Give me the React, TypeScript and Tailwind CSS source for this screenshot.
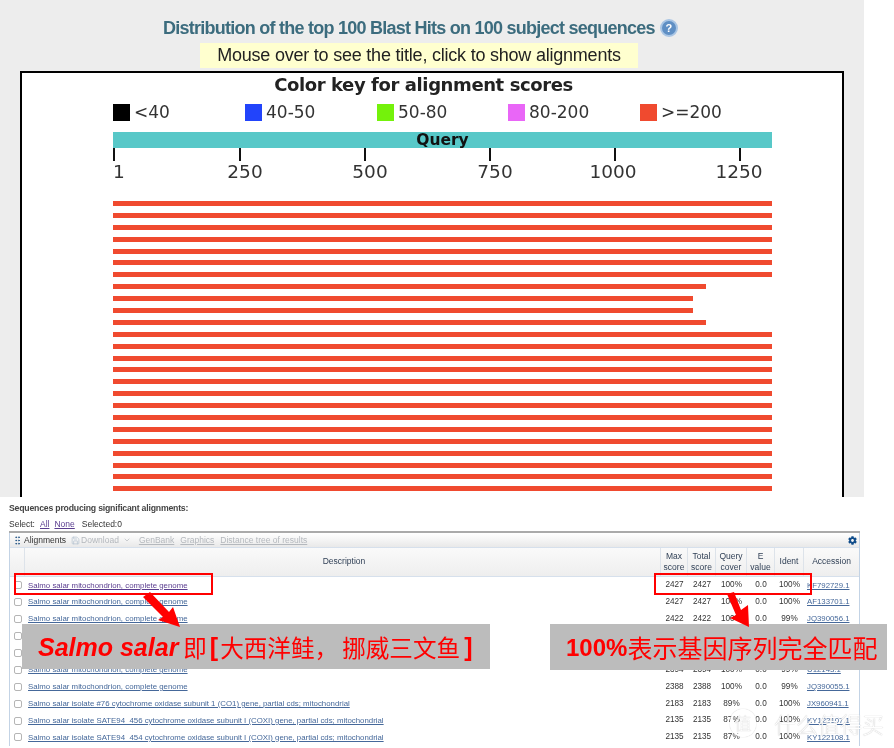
import { ChevronDown, Save, GripVertical } from 'lucide-react';
import { FaCog } from 'react-icons/fa';

const partial = (a: string, b: string) =>
    `Salmo salar isolate ${a} cytochrome oxidase subunit ${b}) gene, partial cds; mitochondrial`;

const rows = [
    { title: 'Salmo salar mitochondrion, complete genome', max: 2427, total: 2427, cover: '100%', ident: '100%', acc: 'KF792729.1', visited: true },
    { title: 'Salmo salar mitochondrion, complete genome', max: 2427, total: 2427, cover: '100%', ident: '100%', acc: 'AF133701.1' },
    { title: 'Salmo salar mitochondrion, complete genome', max: 2422, total: 2422, cover: '100%', ident: '99%', acc: 'JQ390056.1' },
    { title: 'Salmo salar mitochondrion, complete genome', max: 2416, total: 2416, cover: '100%', ident: '99%', acc: 'JQ390057.1' },
    { title: 'Salmo salar mitochondrion, complete genome', max: 2399, total: 2399, cover: '100%', ident: '99%', acc: 'JQ390058.1' },
    { title: 'Salmo salar mitochondrion, complete genome', max: 2394, total: 2394, cover: '100%', ident: '99%', acc: 'U12143.1' },
    { title: 'Salmo salar mitochondrion, complete genome', max: 2388, total: 2388, cover: '100%', ident: '99%', acc: 'JQ390055.1' },
    { title: partial('#76', '1 (CO1'), max: 2183, total: 2183, cover: '89%', ident: '100%', acc: 'JX960941.1' },
    { title: partial('SATE94_456', 'I (COXI'), max: 2135, total: 2135, cover: '87%', ident: '100%', acc: 'KY122107.1' },
    { title: partial('SATE94_454', 'I (COXI'), max: 2135, total: 2135, cover: '87%', ident: '100%', acc: 'KY122108.1' },
];

const legend = [
    { label: '<40', color: 'bg-black', width: 'w-[132px]' },
    { label: '40-50', color: 'bg-[#2244fb]', width: 'w-[132px]' },
    { label: '50-80', color: 'bg-[#74f20b]', width: 'w-[131px]' },
    { label: '80-200', color: 'bg-[#e966f7]', width: 'w-[132px]' },
    { label: '>=200', color: 'bg-[#f04a2f]', width: 'w-[124px]' },
];

const ticks = [
    { x: 1, textX: 6, label: '1' },
    { x: 127, textX: 132, label: '250' },
    { x: 252, textX: 257, label: '500' },
    { x: 377, textX: 382, label: '750' },
    { x: 502, textX: 500, label: '1000' },
    { x: 627, textX: 626, label: '1250' },
];

// 25 hit bars, four of them stop short of the query end
const hits = Array.from({ length: 25 }, (_, i) => {
    if (i === 7 || i === 10) return 'w-[593px]';
    if (i === 8 || i === 9) return 'w-[580px]';
    return 'w-full';
});

const columns = 'grid-cols-[15px_636px_27px_28px_31px_28px_29px_1fr]';

export default function App() {
    return (
        <div className="relative h-[748px] w-[894px] overflow-hidden bg-white font-['Liberation_Sans',sans-serif] blur-[0.3px]">
            {/* Blast graphic */}
            <div className="flex h-[497px] w-[864px] flex-col items-start bg-[#ededed]">
                <div className="mt-[17px] ml-[163px] flex h-[22px] items-center gap-[5px] text-[18px] leading-[22px] font-bold tracking-[-0.75px] text-[#3c6c7e]">
                    Distribution of the top 100 Blast Hits on 100 subject sequences
                    <span className="flex h-[18px] w-[18px] items-center justify-center rounded-full border-2 border-[#a9c5e4] bg-[#5f8fc4] text-[11px] tracking-normal text-white">
                        ?
                    </span>
                </div>
                <div className="mt-[4px] ml-[200px] flex h-[25px] w-[438px] items-center justify-center bg-[#ffffcf] text-[18px] tracking-[-0.22px] text-[#222]">
                    Mouse over to see the title, click to show alignments
                </div>
                <div className="mt-[3px] ml-[20px] flex h-[426px] w-[824px] flex-col border-x-2 border-t-2 border-black bg-white pl-[91px] font-['DejaVu_Sans',sans-serif]">
                    <div className="mt-[1px] h-[22px] pr-[108px] text-center text-[18px] leading-[22px] font-bold tracking-[-0.4px] text-[#222]">
                        Color key for alignment scores
                    </div>
                    <div className="mt-[8px] flex h-[17px] items-center text-[17px] text-[#333]">
                        {legend.map((item) => (
                            <div key={item.label} className={`flex items-center gap-[4px] ${item.width}`}>
                                <span className={`h-[17px] w-[17px] ${item.color}`} />
                                {item.label}
                            </div>
                        ))}
                    </div>
                    <div className="mt-[11px] flex h-[16px] w-[659px] items-center justify-center bg-[#58c8c8] text-[15.5px] leading-[14px] font-bold text-[#111]">
                        Query
                    </div>
                    <svg className="h-[40px] w-[659px]" viewBox="0 0 659 40">
                        {ticks.map((t) => (
                            <g key={t.label}>
                                <line x1={t.x} x2={t.x} y1={0} y2={13} stroke="#111" strokeWidth={2} />
                                <text x={t.textX} y={30} textAnchor="middle" fontSize={18.5} fill="#333">
                                    {t.label}
                                </text>
                            </g>
                        ))}
                    </svg>
                    <div className="mt-[13px] flex w-[659px] flex-col gap-[6.9px]">
                        {hits.map((width, i) => (
                            <div key={i} className={`h-[5px] bg-[#f04a2f] ${width}`} />
                        ))}
                    </div>
                </div>
            </div>

            {/* Descriptions table */}
            <div className="pl-[9px] text-[8.2px] text-[#333]">
                <div className="mt-[5px] h-[12px] text-[8.7px] leading-[12px] font-bold tracking-[-0.2px] text-[#444]">
                    Sequences producing significant alignments:
                </div>
                <div className="mt-[4px] flex h-[12px] items-center text-[8.5px]">
                    <span className="mr-[5px]">Select:</span>
                    <span className="mr-[5px] text-[#5a3d8f] underline">All</span>
                    <span className="mr-[7px] text-[#5a3d8f] underline">None</span>
                    <span>Selected:0</span>
                </div>
                <div className="mt-[1px] w-[851px] border-t-2 border-[#aaaaaa]">
                    <div className="flex h-[14px] items-center border-x border-[#c3d3e5] bg-gradient-to-b from-[#ffffff] to-[#e9e9e9] pr-[2px] text-[8.5px]">
                        <GripVertical size={11} className="ml-[2px] text-[#2a5a8a]" strokeWidth={2} />
                        <span className="mr-[5px] ml-[1px]">Alignments</span>
                        <Save size={9} className="mr-[1px] text-[#b7c4d2]" />
                        <span className="text-[#b4b8bd]">Download</span>
                        <ChevronDown size={8} className="mr-[8px] ml-[4px] text-[#b4b8bd]" />
                        <span className="mr-[6px] text-[#b4b8bd] underline">GenBank</span>
                        <span className="mr-[6px] text-[#b4b8bd] underline">Graphics</span>
                        <span className="text-[#b4b8bd] underline">Distance tree of results</span>
                        <FaCog size={9} className="ml-auto text-[#0f4c8a]" />
                    </div>
                    <div className="border-x border-[#c3d3e5]">
                        <div className={`grid h-[30px] border-t border-b border-[#d6e0ec] bg-gradient-to-b from-[#fafafa] to-[#eeeeee] text-center text-[8.5px] leading-[11.5px] text-[#2f3f55] ${columns}`}>
                            <span className="border-r border-[#dde3ea]" />
                            <span className="flex items-center justify-center border-r border-[#dde3ea] pl-[3px]">Description</span>
                            <span className="flex items-center justify-center border-r border-[#dde3ea]">Max<br />score</span>
                            <span className="flex items-center justify-center border-r border-[#dde3ea]">Total<br />score</span>
                            <span className="flex items-center justify-center border-r border-[#dde3ea]">Query<br />cover</span>
                            <span className="flex items-center justify-center border-r border-[#dde3ea]">E<br />value</span>
                            <span className="flex items-center justify-center border-r border-[#dde3ea]">Ident</span>
                            <span className="flex items-center justify-center">Accession</span>
                        </div>
                        {rows.map((row) => (
                            <div
                                key={row.title + row.acc}
                                className={`grid h-[16.9px] items-center text-center ${columns}`}
                            >
                                <span className="ml-[4px] h-[8px] w-[8px] rounded-[2px] border border-[#b5b5b5] bg-white" />
                                <span className={`pl-[3px] text-left text-[7.85px] underline ${row.visited ? 'text-[#5a3d8f]' : 'text-[#45689a]'}`}>
                                    {row.title}
                                </span>
                                <span>{row.max}</span>
                                <span>{row.total}</span>
                                <span>{row.cover}</span>
                                <span>0.0</span>
                                <span>{row.ident}</span>
                                <span className="pl-[3px] text-left text-[7.8px] text-[#45689a] underline">{row.acc}</span>
                            </div>
                        ))}
                    </div>
                </div>
            </div>

            {/* Red annotations */}
            <div className="absolute top-[573px] left-[14px] h-[22px] w-[199px] border-2 border-[#ff0000]" />
            <div className="absolute top-[573px] left-[654px] h-[22px] w-[158px] border-2 border-[#ff0000]" />

            <div className="absolute top-[624px] left-[22px] flex h-[45px] w-[468px] items-center whitespace-nowrap bg-[#bcbcbc] pt-[3px] pl-[16px] font-bold text-[#ff0000]">
                <span className="text-[25px] italic">Salmo salar</span>
                <span className="ml-[5px] font-['Noto_Sans_CJK_SC',sans-serif] text-[23.5px] font-normal">即</span>
                <span className="ml-[3px] text-[25px]">[</span>
                <span className="ml-[2px] font-['Noto_Sans_CJK_SC',sans-serif] text-[23.6px] font-normal">大西洋鲑，</span>
                <span className="ml-[4px] font-['Noto_Sans_CJK_SC',sans-serif] text-[23.6px] font-normal">挪威三文鱼</span>
                <span className="ml-[4px] text-[25px]">]</span>
            </div>
            <div className="absolute top-[624px] left-[550px] flex h-[46px] w-[337px] items-center whitespace-nowrap bg-[#bcbcbc] pt-[2px] pl-[16px] text-[24px] font-bold text-[#ff0000]">
                100%<span className="font-['Noto_Sans_CJK_SC',sans-serif] text-[25px] font-normal">表示基因序列完全匹配</span>
            </div>

            <svg className="absolute top-[590px] left-[140px] h-[40px] w-[45px]" viewBox="0 0 45 40" fill="#ff0000">
                <polygon points="3,7 10,2 29,22 33,17 40,37 18,30 23,27" />
            </svg>
            <svg className="absolute top-[588px] left-[722px] h-[42px] w-[32px]" viewBox="0 0 32 42" fill="#ff0000">
                <polygon points="5,6 12,4 19,22 26,17 27,39 8,30 14,27" />
            </svg>

            {/* Watermark */}
            <div className="absolute top-[708px] left-[730px] flex items-center gap-[18px] font-['Noto_Sans_CJK_SC',sans-serif] font-light text-white [text-shadow:0_0_1px_#a8a8a8]">
                <span className="flex h-[28px] w-[26px] items-center justify-center rounded-full border-2 border-white text-[17px] shadow-[0_0_1px_#a8a8a8]">值</span>
                <span className="text-[22px] leading-[30px]">什么值得买</span>
            </div>
        </div>
    );
}
